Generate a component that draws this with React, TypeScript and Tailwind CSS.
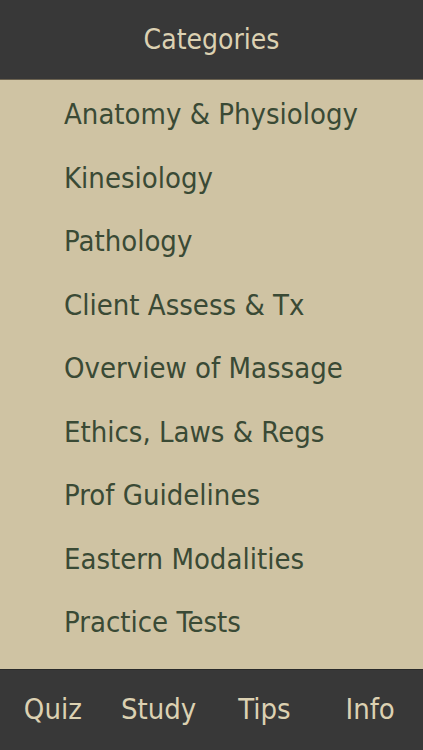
import React from 'react';

const categories = [
  'Anatomy & Physiology',
  'Kinesiology',
  'Pathology',
  'Client Assess & Tx',
  'Overview of Massage',
  'Ethics, Laws & Regs',
  'Prof Guidelines',
  'Eastern Modalities',
  'Practice Tests',
];

const tabs = ['Quiz', 'Study', 'Tips', 'Info'];

export default function App() {
  return (
    <div className="w-[423px] h-[750px] flex flex-col bg-[#cfc3a3] overflow-hidden font-['DejaVu_Sans_Condensed','DejaVu_Sans',sans-serif] [font-stretch:condensed]">
      <header className="h-[80px] shrink-0 bg-[#383838] border-b border-[#6b6250] flex items-center justify-center">
        <span className="text-[28px] text-[#dcd1b2]">Categories</span>
      </header>

      <ul className="flex-1 pt-[3px]">
        {categories.map((c) => (
          <li key={c} className="h-[63.5px] flex items-center pl-[64px] text-[29px] text-[#3a4a35]">
            {c}
          </li>
        ))}
      </ul>

      <nav className="h-[81px] shrink-0 bg-[#383838] border-t border-[#2a2a2a] grid grid-cols-4 items-center">
        {tabs.map((t) => (
          <span key={t} className="text-center text-[29px] text-[#dcd1b2]">
            {t}
          </span>
        ))}
      </nav>
    </div>
  );
}
